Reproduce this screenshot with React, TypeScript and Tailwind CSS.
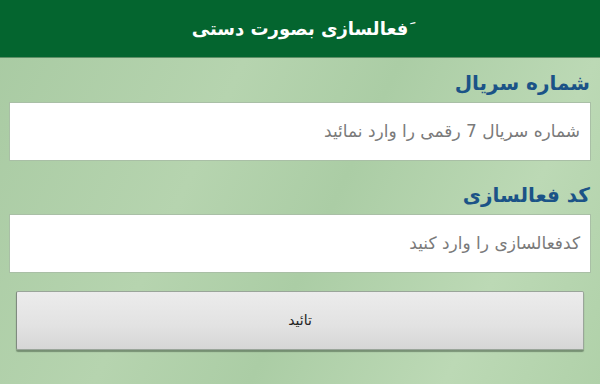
export default function App() {
  return (
    <div
      dir="rtl"
      className="w-[600px] h-[384px] overflow-hidden flex flex-col bg-[linear-gradient(115deg,#a8caa2_0%,#b6d4af_35%,#abcda5_55%,#bcd9b5_80%,#b0d1a9_100%)] font-['DejaVu_Sans',sans-serif]"
    >
      <div className="h-[58px] shrink-0 bg-[#04652f] border-b border-[#5d8f66] flex items-center justify-center">
        <h1 className="text-white text-[18px] font-bold">َفعالسازی بصورت دستی</h1>
      </div>

      <div className="flex flex-col px-[9px] pt-[9px]">
        <label className="text-[#1b5387] text-[20px] font-bold leading-[32px] pr-[1px]">شماره سریال</label>
        <div className="mt-[3px] h-[59px] bg-white border border-[#a9bfa6] flex items-center px-[10px]">
          <span className="text-[#7a7a7a] text-[17px]">شماره سریال 7 رقمی را وارد نمائید</span>
        </div>

        <label className="mt-[18px] text-[#1b5387] text-[20px] font-bold leading-[32px] pr-[1px]">کد فعالسازی</label>
        <div className="mt-[3px] h-[59px] bg-white border border-[#a9bfa6] flex items-center px-[10px]">
          <span className="text-[#7a7a7a] text-[17px]">کدفعالسازی را وارد کنید</span>
        </div>

        <div className="mx-[7px] mt-[18px] h-[59px] rounded-[2px] border border-[#9aa59a] border-l-[#7f8a7f] bg-[linear-gradient(180deg,#ececec_0%,#e2e2e2_60%,#d6d6d6_100%)] shadow-[0_2px_1px_rgba(70,90,70,0.55)] flex items-center justify-center">
          <span className="text-[#222] text-[14px]">تائید</span>
        </div>
      </div>
    </div>
  );
}
